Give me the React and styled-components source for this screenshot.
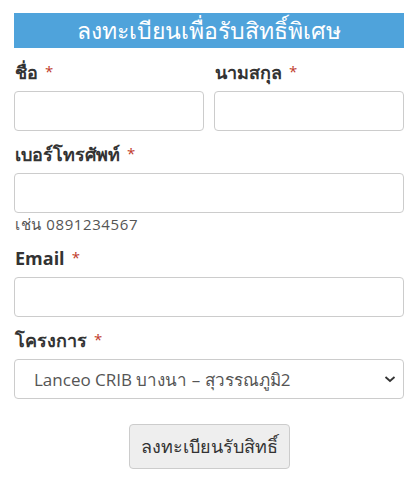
import React from "react";
import styled, { createGlobalStyle } from "styled-components";

const Global = createGlobalStyle`
  html, body { margin: 0; padding: 0; background: #fff; }
  body { font-family: "Open Sans", "Noto Sans", sans-serif; color: #333; }
  * { box-sizing: border-box; }
`;

const Form = styled.form`
  padding: 13px 16px 0 14px;
  width: 420px;
  display: flex;
  flex-direction: column;
`;

const Title = styled.h2`
  margin: 0 0 12px;
  height: 35px;
  background: #4fa3db;
  color: #fff;
  font-size: 23px;
  font-weight: 400;
  line-height: 35px;
  text-align: center;
`;

const Row = styled.div`
  display: grid;
  grid-template-columns: 1fr 1fr;
  gap: 10px;
`;

const Group = styled.div`
  display: flex;
  flex-direction: column;
  margin-bottom: 11px;
`;

const Label = styled.label`
  font-size: 18px;
  font-weight: 700;
  color: #333;
  line-height: 25px;
  height: 25px;
  margin: 0 0 6px 1px;
`;

const Req = styled.span`
  color: #c0392b;
  font-size: 15px;
  font-weight: 400;
  line-height: 0;
  margin-left: 7px;
  vertical-align: 2px;
`;

const Input = styled.input`
  height: 40px;
  width: 100%;
  border: 1px solid #ccc;
  border-radius: 4px;
  background: #fff;
  font-size: 16px;
  padding: 6px 12px;
`;

const Help = styled.div`
  font-size: 15px;
  color: #555;
  line-height: 20px;
  margin: 1px 0 1px 1px;
  letter-spacing: 0.6px;
`;

const SelectWrap = styled.div`
  position: relative;
`;

const Select = styled.select`
  appearance: none;
  height: 40px;
  width: 100%;
  border: 1px solid #ccc;
  border-radius: 4px;
  background: #fff;
  color: #555;
  font-family: "Open Sans", "Noto Sans", sans-serif;
  font-size: 17px;
  padding: 0 30px 0 19px;
`;

const Chevron = styled.svg`
  position: absolute;
  right: 8px;
  top: 15px;
  pointer-events: none;
`;

const Actions = styled.div`
  display: flex;
  justify-content: center;
  margin-top: 14px;
`;

const Button = styled.button`
  height: 45px;
  padding: 0 11px;
  background: #eee;
  border: 1px solid #ccc;
  border-radius: 4px;
  color: #333;
  font-family: "Open Sans", "Noto Sans", sans-serif;
  font-size: 18px;
`;

export default function App() {
  return (
    <>
      <Global />
      <Form>
        <Title>ลงทะเบียนเพื่อรับสิทธิ์พิเศษ</Title>
        <Row>
          <Group>
            <Label>ชื่อ<Req>*</Req></Label>
            <Input />
          </Group>
          <Group>
            <Label>นามสกุล<Req>*</Req></Label>
            <Input />
          </Group>
        </Row>
        <Group>
          <Label>เบอร์โทรศัพท์<Req>*</Req></Label>
          <Input />
          <Help>เช่น 0891234567</Help>
        </Group>
        <Group>
          <Label>Email<Req>*</Req></Label>
          <Input />
        </Group>
        <Group>
          <Label>โครงการ<Req>*</Req></Label>
          <SelectWrap>
            <Select defaultValue="1">
              <option value="1">Lanceo CRIB บางนา – สุวรรณภูมิ2</option>
            </Select>
            <Chevron width="12" height="10" viewBox="0 0 12 10">
              <path d="M1.5 3 L6 7 L10.5 3" fill="none" stroke="#333" strokeWidth="1.8" />
            </Chevron>
          </SelectWrap>
        </Group>
        <Actions>
          <Button type="button">ลงทะเบียนรับสิทธิ์</Button>
        </Actions>
      </Form>
    </>
  );
}
